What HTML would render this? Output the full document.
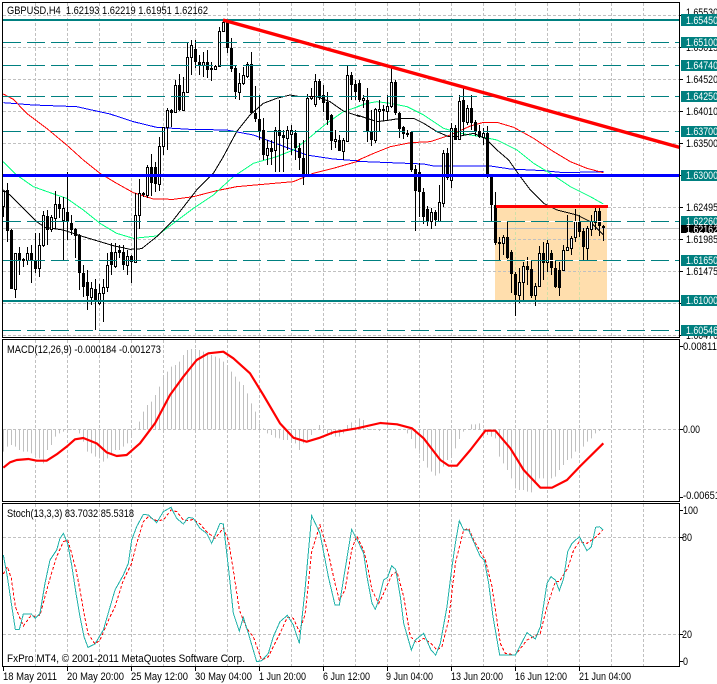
<!DOCTYPE html>
<html><head><meta charset="utf-8"><title>GBPUSD,H4</title>
<style>
html,body{margin:0;padding:0;background:#fff;width:717px;height:684px;overflow:hidden}
svg{display:block}
text{font-family:"Liberation Sans",sans-serif;font-size:11px;fill:#000}
.w text{fill:#fff}
</style></head><body>
<svg width="717" height="684" viewBox="0 0 717 684" xmlns="http://www.w3.org/2000/svg">
<rect width="717" height="684" fill="#fff"/>

<!-- orange zone -->
<rect x="495" y="207" width="112" height="93" fill="#FFDEAD"/>

<!-- grid -->
<path shape-rendering="crispEdges" fill="none" stroke="#c0c0c0" stroke-dasharray="3 2" d="M3 15.5H679M3 47.5H679M3 79.5H679M3 111.5H679M3 143.5H679M3 207.5H679M3 239.5H679M3 271.5H679M3 303.5H679M3 335.5H679
M3 429.5H679M3 537.5H679M3 634.5H679
M35.5 3V337M67.5 3V337M99.5 3V337M131.5 3V337M163.5 3V337M195.5 3V337M227.5 3V337M259.5 3V337M291.5 3V337M323.5 3V337M355.5 3V337M387.5 3V337M419.5 3V337M451.5 3V337M483.5 3V337M515.5 3V337M547.5 3V337M579.5 3V337M611.5 3V337M643.5 3V337
M35.5 340V501M67.5 340V501M99.5 340V501M131.5 340V501M163.5 340V501M195.5 340V501M227.5 340V501M259.5 340V501M291.5 340V501M323.5 340V501M355.5 340V501M387.5 340V501M419.5 340V501M451.5 340V501M483.5 340V501M515.5 340V501M547.5 340V501M579.5 340V501M611.5 340V501M643.5 340V501
M35.5 504V666M67.5 504V666M99.5 504V666M131.5 504V666M163.5 504V666M195.5 504V666M227.5 504V666M259.5 504V666M291.5 504V666M323.5 504V666M355.5 504V666M387.5 504V666M419.5 504V666M451.5 504V666M483.5 504V666M515.5 504V666M547.5 504V666M579.5 504V666M611.5 504V666M643.5 504V666"/>
<!-- grid tint inside the zone -->
<path shape-rendering="crispEdges" fill="none" stroke="#FFDEAD" d="M515.5 207V300M547.5 207V300M579.5 207V300"/>
<path shape-rendering="crispEdges" fill="none" stroke="#CFE0A8" stroke-dasharray="3 2" d="M515.5 207V300M547.5 207V300M579.5 207V300"/>

<!-- last price line -->
<path shape-rendering="crispEdges" stroke="#c0c0c0" d="M3 228.5H679"/>

<!-- moving averages -->
<g transform="scale(.33333)" fill="none" stroke-width="3" shape-rendering="crispEdges">
<polyline stroke="#0000ff" points="10,308 100,315 230,320 330,342 400,365 470,382 570,388 680,390 760,405 840,435 920,465 1000,477 1080,483"/>
<polyline stroke="#ff0000" points="10,282 40,298 80,340 140,385 200,435 250,480 300,520 350,550 400,578 460,597 520,598 580,590 650,572 710,560 800,552 880,545 940,520 1000,505 1080,482"/>
<polyline stroke="#00ff7f" points="10,485 50,525 100,560 150,578 200,595 250,630 300,670 350,700 400,715 470,708 520,670 580,625 640,585 700,530 760,490 830,470 880,450 920,420 980,370 1030,335 1080,318"/>
<polyline stroke="#000" points="10,570 30,585 70,625 110,665 135,682 190,690 240,707 300,725 340,737 390,748 425,746 470,710 520,660 590,570 640,520 670,470 710,395 750,345 790,310 830,295 870,285 900,290 950,290 990,305 1030,333 1080,350"/>
</g>
<g transform="translate(357 0) scale(.33333)" fill="none" stroke-width="3" shape-rendering="crispEdges">
<polyline stroke="#0000ff" points="0,484 100,488 200,492 230,498 400,498 460,507 560,512 620,518 739,515"/>
<polyline stroke="#ff0000" points="0,482 50,460 100,440 160,428 220,425 280,405 340,378 380,367 420,367 470,382 530,415 590,455 640,485 690,505 739,518"/>
<polyline stroke="#00ff7f" points="0,320 30,310 60,305 100,310 150,320 200,345 260,385 310,400 370,410 420,420 480,450 530,490 580,520 640,560 700,590 739,612"/>
<polyline stroke="#000" points="0,345 30,355 60,365 100,360 130,355 170,355 200,370 240,395 275,410 300,410 350,400 385,415 420,450 455,480 490,530 520,570 560,610 600,630 660,645 700,665 739,705"/>
</g>

<!-- candle wicks -->
<path shape-rendering="crispEdges" stroke="#000" fill="none" d="M3.5 191V217M7.5 183V242M11.5 229V289M15.5 253V298M19.5 247V275M23.5 258V267M27.5 247V265M31.5 245V283M35.5 233V273M39.5 233V277M43.5 211V247M47.5 210V245M51.5 215V232M55.5 191V229M59.5 197V218M63.5 197V260M67.5 172V240M71.5 215V235M75.5 228V258M79.5 234V290M83.5 265V297M87.5 270V310M91.5 282V305M95.5 279V330M99.5 284V305M103.5 279V322M107.5 253V292M111.5 243V275M115.5 243V268M119.5 245V258M123.5 245V270M127.5 250V275M131.5 255V283M135.5 193V263M139.5 179V229M143.5 192V197M147.5 165V198M151.5 154V196M155.5 162V192M159.5 137V191M163.5 127V155M167.5 108V150M171.5 109V127M175.5 80V113M179.5 74V111M183.5 77V111M187.5 42V92M191.5 40V75M195.5 40V68M199.5 55V75M203.5 52V77M207.5 50V78M211.5 62V81M215.5 65V70M219.5 27V67M223.5 19V32M227.5 19V53M231.5 38V72M235.5 65V99M239.5 73V100M243.5 67V85M247.5 62V78M251.5 52V114M255.5 86V122M259.5 95V140M263.5 118V160M267.5 140V165M271.5 140V165M275.5 127V172M279.5 100V172M283.5 130V172M287.5 126V150M291.5 125V155M295.5 130V160M299.5 143V170M303.5 140V185M307.5 94V176M311.5 88V100M315.5 74V107M319.5 79V100M323.5 85V112M327.5 92V125M331.5 114V150M335.5 130V148M339.5 135V151M343.5 138V160M347.5 66V142M351.5 72V100M355.5 80V100M359.5 80V102M363.5 95V108M367.5 88V142M371.5 110V146M375.5 108V143M379.5 100V132M383.5 105V121M387.5 95V120M391.5 67V108M395.5 80V115M399.5 112V138M403.5 126V139M407.5 130V137M411.5 131V172M415.5 165V231M419.5 163V217M423.5 188V224M427.5 206V226M431.5 208V229M435.5 210V226M439.5 185V222M443.5 150V207M447.5 148V180M451.5 123V188M455.5 125V140M459.5 95V140M463.5 87V135M467.5 105V125M471.5 95V130M475.5 120V136M479.5 125V138M483.5 128V145M487.5 126V178M491.5 174V222M495.5 192V245M499.5 237V260M503.5 235V255M507.5 221V259M511.5 250V293M515.5 272V316M519.5 268V303M523.5 262V302M527.5 257V285M531.5 261V298M535.5 283V306M539.5 246V287M543.5 242V280M547.5 240V272M551.5 250V275M555.5 261V288M559.5 262V296M563.5 245V271M567.5 215V250M571.5 236V255M575.5 209V242M579.5 215V237M583.5 228V260M587.5 226V260M591.5 215V236M595.5 208V230M599.5 208V236M603.5 225V241"/>
<!-- black bodies -->
<path shape-rendering="crispEdges" fill="#000" d="M6 190h3V231h-3zM10 230h3V289h-3zM18 253h3V260h-3zM22 259h3V261h-3zM30 253h3V260h-3zM34 260h3V269h-3zM46 216h3V230h-3zM58 204h3V209h-3zM66 212h3V221h-3zM70 223h3V230h-3zM74 229h3V236h-3zM78 235h3V273h-3zM82 273h3V287h-3zM86 282h3V296h-3zM94 289h3V302h-3zM110 252h3V265h-3zM118 250h3V253h-3zM122 252h3V265h-3zM130 256h3V262h-3zM142 193h3V195h-3zM150 167h3V183h-3zM154 167h3V184h-3zM170 110h3V113h-3zM178 85h3V110h-3zM194 49h3V62h-3zM198 62h3V65h-3zM206 62h3V70h-3zM210 68h3V70h-3zM226 20h3V48h-3zM230 48h3V69h-3zM234 68h3V92h-3zM250 64h3V113h-3zM254 113h3V119h-3zM258 119h3V132h-3zM262 130h3V155h-3zM270 148h3V152h-3zM278 130h3V136h-3zM282 135h3V138h-3zM294 133h3V148h-3zM298 148h3V158h-3zM302 158h3V175h-3zM318 81h3V98h-3zM322 95h3V103h-3zM326 102h3V120h-3zM330 115h3V141h-3zM338 140h3V151h-3zM350 75h3V85h-3zM354 84h3V92h-3zM358 83h3V100h-3zM366 100h3V132h-3zM370 132h3V140h-3zM382 109h3V111h-3zM394 82h3V113h-3zM398 113h3V129h-3zM402 127h3V134h-3zM406 133h3V135h-3zM410 132h3V170h-3zM414 169h3V191h-3zM418 172h3V192h-3zM422 192h3V217h-3zM426 209h3V222h-3zM434 212h3V220h-3zM446 153h3V178h-3zM454 128h3V140h-3zM462 100h3V122h-3zM470 108h3V123h-3zM474 122h3V132h-3zM478 131h3V137h-3zM486 133h3V177h-3zM490 176h3V205h-3zM494 205h3V243h-3zM498 242h3V244h-3zM506 237h3V258h-3zM510 252h3V274h-3zM514 274h3V295h-3zM526 266h3V270h-3zM530 269h3V296h-3zM542 253h3V263h-3zM550 253h3V268h-3zM554 268h3V287h-3zM558 270h3V288h-3zM578 221h3V232h-3zM582 231h3V247h-3zM598 211h3V226h-3zM602 226h3V228h-3z"/>
<!-- white bodies -->
<path shape-rendering="crispEdges" fill="#fff" stroke="#000" d="M2.5 191.5h2V206.5h-2zM14.5 253.5h2V289.5h-2zM26.5 253.5h2V260.5h-2zM38.5 245.5h2V268.5h-2zM42.5 215.5h2V245.5h-2zM50.5 217.5h2V229.5h-2zM54.5 204.5h2V218.5h-2zM62.5 208.5h2V220.5h-2zM90.5 288.5h2V297.5h-2zM98.5 293.5h2V303.5h-2zM102.5 287.5h2V293.5h-2zM106.5 265.5h2V287.5h-2zM114.5 252.5h2V266.5h-2zM126.5 256.5h2V265.5h-2zM134.5 215.5h2V262.5h-2zM138.5 193.5h2V215.5h-2zM146.5 167.5h2V195.5h-2zM158.5 146.5h2V184.5h-2zM162.5 127.5h2V146.5h-2zM166.5 110.5h2V127.5h-2zM174.5 85.5h2V112.5h-2zM182.5 92.5h2V110.5h-2zM186.5 57.5h2V92.5h-2zM190.5 45.5h2V57.5h-2zM202.5 62.5h2V65.5h-2zM214.5 66.5h2V69.5h-2zM218.5 31.5h2V66.5h-2zM222.5 22.5h2V31.5h-2zM238.5 83.5h2V92.5h-2zM242.5 75.5h2V83.5h-2zM246.5 64.5h2V76.5h-2zM266.5 148.5h2V155.5h-2zM274.5 130.5h2V150.5h-2zM286.5 130.5h2V138.5h-2zM290.5 130.5h2V134.5h-2zM306.5 98.5h2V175.5h-2zM310.5 96.5h2V98.5h-2zM314.5 81.5h2V104.5h-2zM334.5 139.5h2V141.5h-2zM342.5 140.5h2V151.5h-2zM346.5 75.5h2V141.5h-2zM362.5 98.5h2V100.5h-2zM374.5 109.5h2V140.5h-2zM378.5 109.5h2V111.5h-2zM386.5 106.5h2V111.5h-2zM390.5 82.5h2V106.5h-2zM430.5 212.5h2V221.5h-2zM438.5 202.5h2V221.5h-2zM442.5 153.5h2V203.5h-2zM450.5 128.5h2V180.5h-2zM458.5 101.5h2V139.5h-2zM466.5 108.5h2V122.5h-2zM482.5 133.5h2V137.5h-2zM502.5 237.5h2V243.5h-2zM518.5 282.5h2V295.5h-2zM522.5 266.5h2V282.5h-2zM534.5 286.5h2V295.5h-2zM538.5 253.5h2V286.5h-2zM546.5 243.5h2V262.5h-2zM562.5 250.5h2V270.5h-2zM566.5 247.5h2V250.5h-2zM570.5 238.5h2V248.5h-2zM574.5 221.5h2V237.5h-2zM586.5 228.5h2V248.5h-2zM590.5 221.5h2V229.5h-2zM594.5 211.5h2V222.5h-2z"/>

<!-- horizontal levels -->
<path shape-rendering="crispEdges" fill="none" stroke="#fff" d="M496 221.5H606M496 260.5H606"/>
<path shape-rendering="crispEdges" fill="none" stroke="#008080" stroke-width="1" stroke-dasharray="18 6" d="M3 42.5H679M3 65.5H679M3 96.5H679M3 131.5H679M3 221.5H679M3 260.5H679M3 330.5H679"/>
<path shape-rendering="crispEdges" fill="none" stroke="#008080" stroke-width="2" d="M3 20H679M3 301H679"/>
<path shape-rendering="crispEdges" fill="none" stroke="#0000ff" stroke-width="3" d="M3 175.5H679"/>
<path fill="none" stroke="#ff0000" stroke-width="3.4" d="M223 20L680 147.5"/>
<path shape-rendering="crispEdges" fill="none" stroke="#ff0000" stroke-width="3" d="M496 206.5H608"/>

<!-- MACD histogram -->
<g transform="translate(0 335) scale(1 .33333)">
<path fill="none" stroke="#c0c0c0" d="M3.5 283V350M7.5 283V335M11.5 283V330M15.5 283V335M19.5 283V345M23.5 283V350M27.5 283V350M31.5 283V355M35.5 283V360M39.5 283V370M43.5 283V385M47.5 283V345M51.5 283V330M55.5 283V305M59.5 283V295M63.5 283V290M67.5 283V287M71.5 283V285M75.5 283V285M79.5 283V295M83.5 283V320M87.5 283V350M91.5 283V355M95.5 283V365M99.5 283V370M103.5 283V380M107.5 283V370M111.5 283V360M115.5 283V345M119.5 283V345M123.5 283V335M127.5 283V325M131.5 283V300M135.5 283V280M139.5 283V260M143.5 283V230M147.5 283V210M151.5 283V200M155.5 283V180M159.5 283V155M163.5 283V125M167.5 283V110M171.5 283V95M175.5 283V90M179.5 283V80M183.5 283V60M187.5 283V45M191.5 283V42M195.5 283V42M199.5 283V45M203.5 283V50M207.5 283V55M211.5 283V60M215.5 283V65M219.5 283V70M223.5 283V80M227.5 283V90M231.5 283V110M235.5 283V125M239.5 283V140M243.5 283V150M247.5 283V175M251.5 283V205M255.5 283V230M259.5 283V265M263.5 283V280M267.5 283V295M271.5 283V300M275.5 283V308M279.5 283V310M283.5 283V315M287.5 283V315M291.5 283V320M295.5 283V325M299.5 283V345M303.5 283V325M307.5 283V315M311.5 283V300M315.5 283V282M319.5 283V270M323.5 283V282M327.5 283V295M331.5 283V300M335.5 283V305M339.5 283V305M343.5 283V295M347.5 283V270M351.5 283V262M355.5 283V270M359.5 283V250M363.5 283V255M367.5 283V280M371.5 283V285M375.5 283V285M379.5 283V288M383.5 283V285M387.5 283V288M391.5 283V285M395.5 283V285M399.5 283V285M403.5 283V285M407.5 283V295M411.5 283V312M415.5 283V340M419.5 283V355M423.5 283V378M427.5 283V398M431.5 283V410M435.5 283V422M439.5 283V415M443.5 283V395M447.5 283V375M451.5 283V360M455.5 283V340M459.5 283V312M463.5 283V290M467.5 283V283M471.5 283V268M475.5 283V268M479.5 283V265M483.5 283V290M487.5 283V300M491.5 283V305M495.5 283V310M499.5 283V365M503.5 283V385M507.5 283V405M511.5 283V430M515.5 283V460M519.5 283V465M523.5 283V465M527.5 283V470M531.5 283V472M535.5 283V445M539.5 283V430M543.5 283V430M547.5 283V450M551.5 283V430M555.5 283V425M559.5 283V405M563.5 283V390M567.5 283V375M571.5 283V370M575.5 283V350M579.5 283V345M583.5 283V335M587.5 283V320M591.5 283V310M595.5 283V295M599.5 283V288M603.5 283V285"/>
</g>
<!-- MACD signal -->
<g transform="translate(0 335) scale(.33333)"><polyline fill="none" stroke="#f00" stroke-width="6.5" stroke-linejoin="round" points="10,398 30,382 50,375 85,372 110,377 140,377 170,358 200,335 225,313 250,309 290,325 320,352 350,363 380,360 420,325 465,265 510,180 550,125 590,75 625,55 670,50 700,70 750,115 790,180 840,265 880,308 920,320 960,308 1000,292 1071,280"/></g>
<g transform="translate(357 335) scale(.33333)"><polyline fill="none" stroke="#f00" stroke-width="6.5" stroke-linejoin="round" points="0,280 70,264 120,268 165,280 200,310 250,375 275,392 300,392 340,345 385,287 415,287 460,340 500,405 550,458 585,458 630,435 670,393 739,325"/></g>

<!-- Stochastic -->
<g transform="translate(0 500) scale(.33333)" fill="none" stroke-width="3" shape-rendering="crispEdges">
<polyline stroke="#f00" stroke-dasharray="9 6" points="10,222 22,200 34,235 46,320 58,350 70,378 94,345 106,350 120,345 135,290 150,235 170,170 190,125 203,120 215,160 228,210 240,270 252,340 264,400 285,432 300,420 330,350 345,320 370,240 395,190 410,130 430,65 445,50 470,62 490,60 513,30 530,35 550,60 565,62 580,58 600,72 620,95 645,115 670,85 685,120 700,210 718,330 740,385 760,410 785,480 805,470 820,440 840,400 862,352 880,355 898,395 915,345 935,155 960,75 985,160 1005,250 1018,300 1035,270 1055,150 1070,108 1071,110"/>
<polyline stroke="#20b2aa" points="10,165 22,230 34,310 46,388 58,388 70,342 94,342 106,355 120,340 135,250 150,180 170,150 180,115 190,100 203,130 215,195 228,280 240,350 252,410 264,442 285,432 310,390 345,270 370,225 385,190 395,120 410,80 430,43 445,45 470,68 490,35 513,22 530,55 550,72 565,52 580,55 600,85 620,100 635,130 660,70 670,72 685,200 700,340 718,393 730,352 745,400 770,485 785,482 805,460 820,410 840,365 862,346 880,375 898,430 915,270 935,47 960,100 985,230 1005,315 1018,315 1035,210 1055,88 1071,120"/>
</g>
<g transform="translate(357 500) scale(.33333)" fill="none" stroke-width="3" shape-rendering="crispEdges">
<polyline stroke="#f00" stroke-dasharray="9 6" points="0,110 20,150 30,190 45,270 65,310 80,280 104,225 120,215 140,290 160,410 180,428 200,415 222,430 240,450 255,440 275,360 295,190 320,90 335,85 350,120 385,180 405,260 430,430 445,460 475,465 510,420 535,407 550,400 570,320 595,245 607,245 632,205 650,150 667,125 690,130 716,112 739,88"/>
<polyline stroke="#20b2aa" points="0,118 20,160 30,230 45,310 55,328 65,300 80,240 92,232 104,197 116,208 130,290 140,370 163,450 175,420 200,400 222,450 236,465 250,430 270,320 285,200 295,130 307,62 320,90 335,90 350,125 370,170 382,180 395,250 408,350 428,465 475,465 510,398 535,417 550,380 570,250 582,230 595,240 607,272 620,235 632,155 645,130 667,110 690,152 703,140 716,82 727,80 739,90"/>
</g>

<!-- panel frames -->
<g shape-rendering="crispEdges" fill="none" stroke="#000">
<rect x="2.5" y="2.5" width="677" height="335"/>
<rect x="2.5" y="339.5" width="677" height="162"/>
<rect x="2.5" y="503.5" width="677" height="163"/>
<path d="M680 15.5h3M680 47.5h3M680 79.5h3M680 111.5h3M680 143.5h3M680 175.5h3M680 207.5h3M680 239.5h3M680 271.5h3M680 303.5h3M680 335.5h3M680 346.5h3M680 429.5h3M680 497.5h3M680 510.5h3M680 537.5h3M680 634.5h3M680 661.5h3
M3.5 667v4M67.5 667v4M131.5 667v4M195.5 667v4M259.5 667v4M323.5 667v4M387.5 667v4M451.5 667v4M515.5 667v4M579.5 667v4"/>
</g>

<!-- chart titles -->
<text x="7" y="14" textLength="201" lengthAdjust="spacingAndGlyphs">GBPUSD,H4 &#160;1.62193 1.62219 1.61951 1.62162</text>
<text x="7" y="353" textLength="154" lengthAdjust="spacingAndGlyphs">MACD(12,26,9) -0.000184 -0.001273</text>
<text x="7" y="517" textLength="127" lengthAdjust="spacingAndGlyphs">Stoch(13,3,3) 83.7032 85.5318</text>
<text x="7" y="662" textLength="238" lengthAdjust="spacingAndGlyphs">FxPro MT4, © 2001-2011 MetaQuotes Software Corp.</text>

<!-- price axis -->
<g>
<text x="686" y="16" textLength="32" lengthAdjust="spacingAndGlyphs">1.65530</text>
<text x="686" y="51" textLength="32" lengthAdjust="spacingAndGlyphs">1.65015</text>
<text x="686" y="83" textLength="32" lengthAdjust="spacingAndGlyphs">1.64520</text>
<text x="686" y="115" textLength="32" lengthAdjust="spacingAndGlyphs">1.64010</text>
<text x="686" y="147" textLength="32" lengthAdjust="spacingAndGlyphs">1.63500</text>
<text x="686" y="211" textLength="32" lengthAdjust="spacingAndGlyphs">1.62495</text>
<text x="686" y="243" textLength="32" lengthAdjust="spacingAndGlyphs">1.61985</text>
<text x="686" y="275" textLength="32" lengthAdjust="spacingAndGlyphs">1.61475</text>
<text x="686" y="339" textLength="32" lengthAdjust="spacingAndGlyphs">1.60470</text>
<text x="683" y="350" textLength="34" lengthAdjust="spacingAndGlyphs">0.00811</text>
<text x="683" y="433" textLength="17" lengthAdjust="spacingAndGlyphs">0.00</text>
<text x="683" y="499" textLength="37" lengthAdjust="spacingAndGlyphs">-0.00651</text>
<text x="683" y="514" textLength="15" lengthAdjust="spacingAndGlyphs">100</text>
<text x="682" y="541" textLength="10" lengthAdjust="spacingAndGlyphs">80</text>
<text x="682" y="638" textLength="10" lengthAdjust="spacingAndGlyphs">20</text>
<text x="683" y="665" textLength="5" lengthAdjust="spacingAndGlyphs">0</text>
</g>
<g shape-rendering="crispEdges" fill="#008080">
<rect x="681" y="14" width="36" height="12"/>
<rect x="681" y="37" width="36" height="11"/>
<rect x="681" y="60" width="36" height="11"/>
<rect x="681" y="91" width="36" height="11"/>
<rect x="681" y="126" width="36" height="11"/>
<rect x="681" y="170" width="36" height="11"/>
<rect x="681" y="216" width="36" height="10"/>
<rect x="681" y="255" width="36" height="11"/>
<rect x="681" y="295" width="36" height="11"/>
<rect x="681" y="325" width="36" height="11"/>
</g>
<rect shape-rendering="crispEdges" x="681" y="225" width="36" height="8" fill="#000"/>
<g class="w">
<text x="686" y="24" textLength="32" lengthAdjust="spacingAndGlyphs">1.65450</text>
<text x="686" y="46" textLength="32" lengthAdjust="spacingAndGlyphs">1.65100</text>
<text x="686" y="69" textLength="32" lengthAdjust="spacingAndGlyphs">1.64740</text>
<text x="686" y="100" textLength="32" lengthAdjust="spacingAndGlyphs">1.64250</text>
<text x="686" y="135" textLength="32" lengthAdjust="spacingAndGlyphs">1.63700</text>
<text x="686" y="179" textLength="32" lengthAdjust="spacingAndGlyphs">1.63000</text>
<text x="686" y="225" textLength="32" lengthAdjust="spacingAndGlyphs">1.62260</text>
<text x="686" y="233" textLength="32" lengthAdjust="spacingAndGlyphs">1.62162</text>
<text x="686" y="264" textLength="32" lengthAdjust="spacingAndGlyphs">1.61650</text>
<text x="686" y="304" textLength="32" lengthAdjust="spacingAndGlyphs">1.61000</text>
<text x="686" y="334" textLength="32" lengthAdjust="spacingAndGlyphs">1.60546</text>
</g>

<!-- time axis -->
<text x="3" y="680" textLength="54" lengthAdjust="spacingAndGlyphs">18 May 2011</text>
<text x="67" y="680" textLength="57" lengthAdjust="spacingAndGlyphs">20 May 20:00</text>
<text x="131" y="680" textLength="57" lengthAdjust="spacingAndGlyphs">25 May 12:00</text>
<text x="195" y="680" textLength="57" lengthAdjust="spacingAndGlyphs">30 May 04:00</text>
<text x="259" y="680" textLength="47" lengthAdjust="spacingAndGlyphs">1 Jun 20:00</text>
<text x="323" y="680" textLength="47" lengthAdjust="spacingAndGlyphs">6 Jun 12:00</text>
<text x="386" y="680" textLength="47" lengthAdjust="spacingAndGlyphs">9 Jun 04:00</text>
<text x="451" y="680" textLength="52" lengthAdjust="spacingAndGlyphs">13 Jun 20:00</text>
<text x="515" y="680" textLength="52" lengthAdjust="spacingAndGlyphs">16 Jun 12:00</text>
<text x="579" y="680" textLength="52" lengthAdjust="spacingAndGlyphs">21 Jun 04:00</text>
</svg>
</body></html>
